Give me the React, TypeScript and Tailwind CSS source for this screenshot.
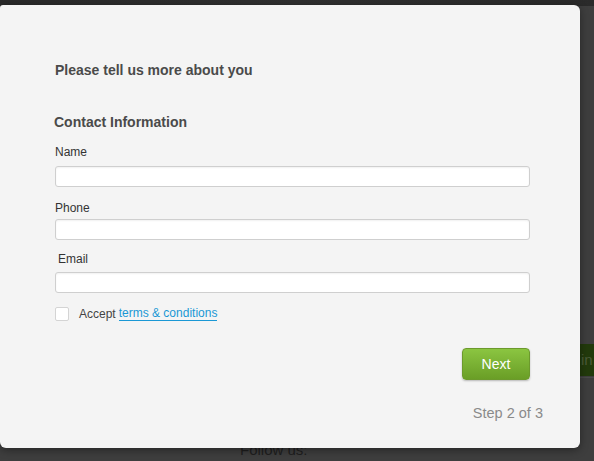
import React from "react";

export default function App() {
  return (
    <div className="relative w-[594px] h-[461px] overflow-hidden bg-[#3e3e3e]" style={{ fontFamily: '"Liberation Sans", Arial, sans-serif' }}>
      {/* page behind */}
      <div className="h-[6px] bg-gradient-to-r from-[#2a2a2a] via-[#303030] to-[#2a2a2a]" />
      <div className="absolute left-[580px] top-[344px] w-[20px] h-[32px] bg-[#223a0c] text-[#4b5a3a] text-[15px] leading-[32px] pl-[1px]">in</div>
      <div className="absolute left-[580px] top-[377px] w-[20px] h-[1px] bg-[#4a4a4a]" />
      <div className="absolute left-[240px] top-[439px] text-[15px] text-[#1e1e1e]">Follow us:</div>

      {/* modal */}
      <div className="absolute left-0 top-[5px] w-[580px] h-[443px] bg-[#f4f4f4] rounded-[6px] rounded-tl-[3px] shadow-[0_2px_8px_rgba(0,0,0,0.4)]">
        <div className="pl-[55px] pr-[50px] pt-[57px]">
          <h1 className="text-[14px] font-bold text-[#4a4a4a] leading-[16px]">Please tell us more about you</h1>
          <h2 className="mt-[36px] -ml-[1px] text-[14px] font-bold text-[#4a4a4a] leading-[16px]">Contact Information</h2>

          <label className="block mt-[15px] text-[12px] text-[#333] leading-[14px]">Name</label>
          <input className="block mt-[7px] w-[475px] h-[21px] bg-white border border-[#cfcfcf] rounded-[3px] shadow-[inset_0_1px_2px_rgba(0,0,0,0.06)] outline-none" />

          <label className="block mt-[14px] text-[12px] text-[#333] leading-[14px]">Phone</label>
          <input className="block mt-[4px] w-[475px] h-[21px] bg-white border border-[#cfcfcf] rounded-[3px] shadow-[inset_0_1px_2px_rgba(0,0,0,0.06)] outline-none" />

          <label className="block mt-[12px] ml-[3px] text-[12px] text-[#333] leading-[14px]">Email</label>
          <input className="block mt-[6px] w-[475px] h-[21px] bg-white border border-[#cfcfcf] rounded-[3px] shadow-[inset_0_1px_2px_rgba(0,0,0,0.06)] outline-none" />

          <div className="flex items-center mt-[13px] h-[15px]">
            <span className="w-[14px] h-[14px] bg-white border border-[#d4d4d4] rounded-[2px]" />
            <span className="ml-[10px] text-[12px] text-[#444] leading-[14px]">Accept</span>
            <span className="ml-[3px] text-[12px] text-[#1a98d5] leading-[13px] border-b border-[#1a98d5]">terms &amp; conditions</span>
          </div>

          <div className="flex justify-end mt-[27px]">
            <button className="w-[68px] h-[32px] rounded-[4px] text-white text-[14px] bg-gradient-to-b from-[#8bc541] to-[#6a9e26] border border-[#6c9a2c] shadow-[0_1px_2px_rgba(0,0,0,0.25)]">Next</button>
          </div>

          <div className="flex justify-end mt-[25px] -mr-[13px] text-[14.5px] text-[#8a8a8a] leading-[16px]">Step 2 of 3</div>
        </div>
      </div>
    </div>
  );
}
